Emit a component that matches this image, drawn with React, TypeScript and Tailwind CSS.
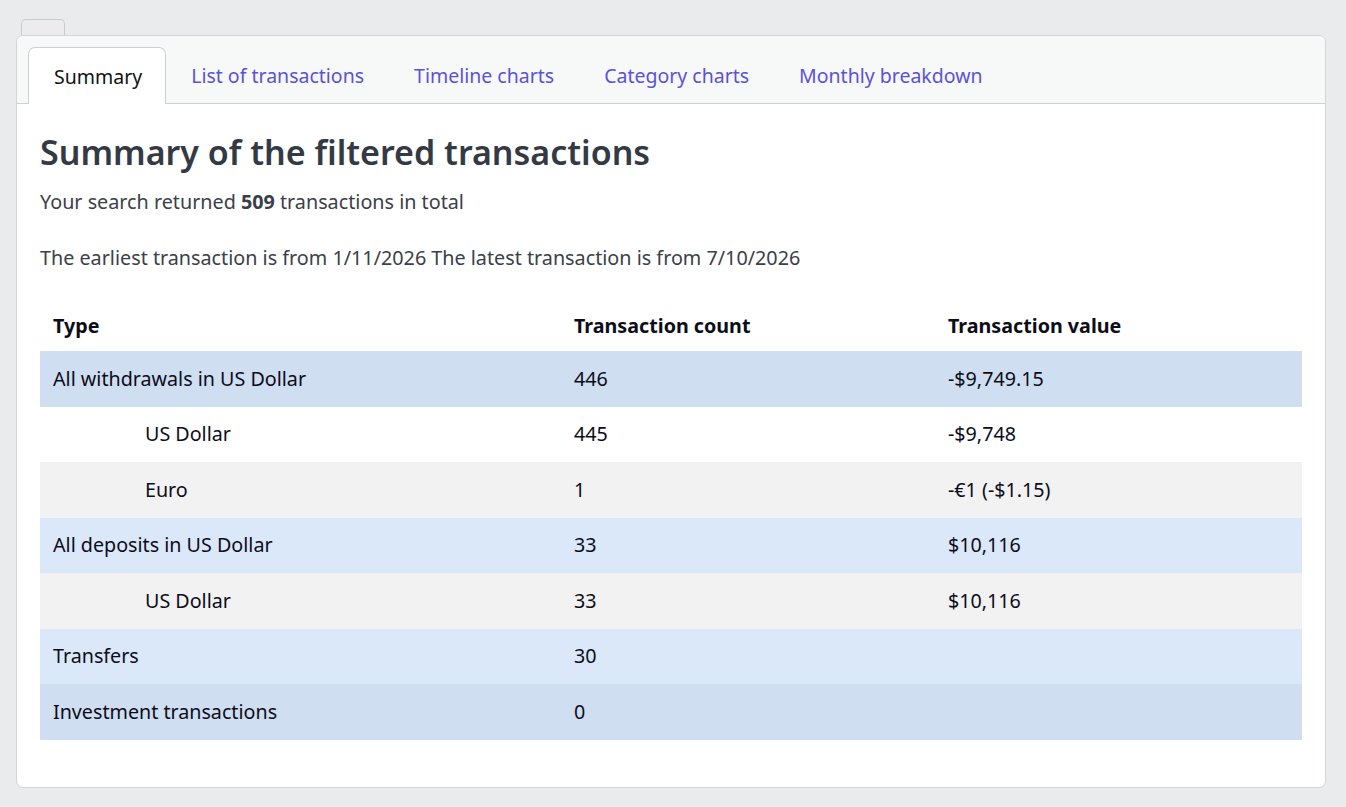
import React from "react";

const tabs = ["Summary", "List of transactions", "Timeline charts", "Category charts", "Monthly breakdown"];

type Row = { label: string; count: string; value: string; bg: string; indent?: boolean };

const rows: Row[] = [
  { label: "All withdrawals in US Dollar", count: "446", value: "-$9,749.15", bg: "bg-[#cfdef0]" },
  { label: "US Dollar", count: "445", value: "-$9,748", bg: "bg-white", indent: true },
  { label: "Euro", count: "1", value: "-€1 (-$1.15)", bg: "bg-[#f2f2f2]", indent: true },
  { label: "All deposits in US Dollar", count: "33", value: "$10,116", bg: "bg-[#dbe8fa]" },
  { label: "US Dollar", count: "33", value: "$10,116", bg: "bg-[#f2f2f2]", indent: true },
  { label: "Transfers", count: "30", value: "", bg: "bg-[#dbe8fa]" },
  { label: "Investment transactions", count: "0", value: "", bg: "bg-[#cfdef0]" },
];

export default function App() {
  return (
    <div
      className="w-[1346px] h-[807px] bg-[#eaebed] pt-[19px] overflow-hidden"
      style={{ fontFamily: '"Noto Sans", "Open Sans", sans-serif' }}
    >
      <div className="ml-[21px] w-[44px] h-[16px] border border-b-0 border-[#c9cacc] rounded-t-[5px] bg-[#ececee]" />
      <div className="ml-[16px] w-[1310px] h-[753px] bg-white border border-[#d3d4d6] rounded-[7px] overflow-hidden flex flex-col">
        <div className="h-[68px] bg-[#f7f8f8] border-b border-[#cfd0d2] pt-[11px] pl-[11px] flex items-end">
          {tabs.map((t, i) =>
            i === 0 ? (
              <div
                key={t}
                className="h-[57px] -mb-px pl-[25px] pr-[23px] pt-[2px] flex items-center bg-white border border-b-0 border-[#cfd0d2] rounded-t-[7px] text-[19.5px] text-[#111]"
              >
                {t}
              </div>
            ) : (
              <div key={t} className="h-[56px] px-[25px] pt-[2px] flex items-center text-[19.5px] text-[#5b52d6]">
                {t}
              </div>
            )
          )}
        </div>
        <div className="px-[23px] pt-[26px]">
          <h1 className="text-[34px] font-semibold text-[#343a44] leading-[44px]">
            Summary of the filtered transactions
          </h1>
          <p className="text-[19.75px] text-[#3b4048] mt-[14px] leading-[28px]">
            Your search returned <b className="font-bold">509</b> transactions in total
          </p>
          <p className="text-[19.75px] text-[#3b4048] mt-[28px] leading-[28px]">
            The earliest transaction is from 1/11/2026 The latest transaction is from 7/10/2026
          </p>
          <table className="w-full mt-[28px] text-[19.7px] text-[#0d0d1a] border-collapse">
            <thead>
              <tr className="h-[51px]">
                <th className="w-[521px] text-left font-bold pl-[13px]">Type</th>
                <th className="w-[374px] text-left font-bold pl-[13px]">Transaction count</th>
                <th className="text-left font-bold pl-[13px]">Transaction value</th>
              </tr>
            </thead>
            <tbody>
              {rows.map((r, i) => (
                <tr key={i} className={`h-[55.5px] ${r.bg}`}>
                  <td className={r.indent ? "pl-[105px]" : "pl-[13px]"}>{r.label}</td>
                  <td className="pl-[13px]">{r.count}</td>
                  <td className="pl-[13px]">{r.value}</td>
                </tr>
              ))}
            </tbody>
          </table>
        </div>
      </div>
    </div>
  );
}
